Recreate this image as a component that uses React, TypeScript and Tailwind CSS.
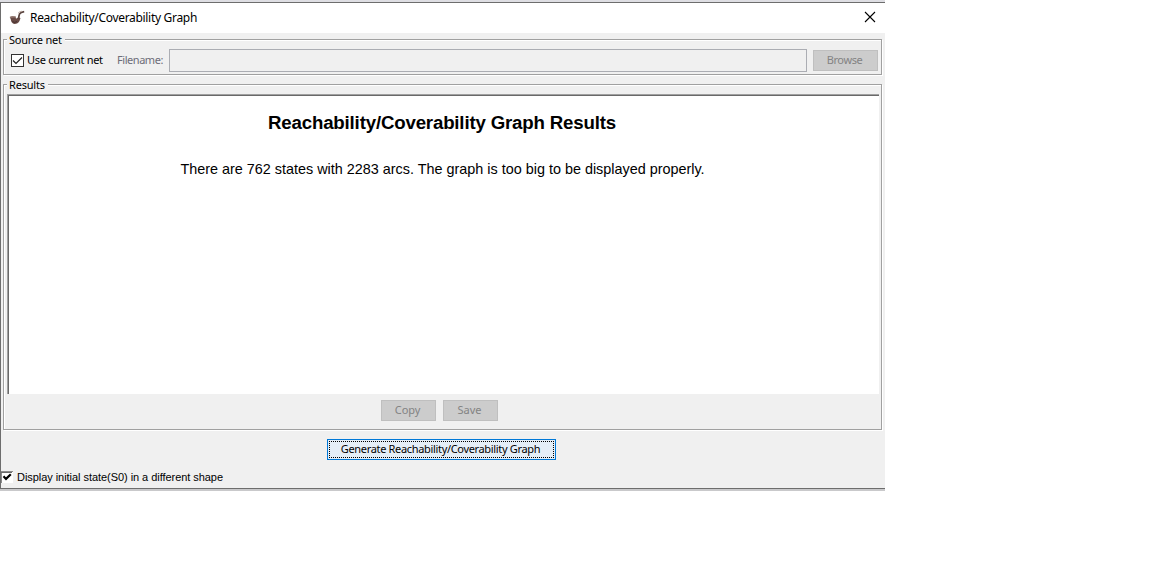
import type { ReactNode } from "react";

const ui = "font-['Noto_Sans',sans-serif] text-[11px]";

function Group({ title, titleClass, className, children }: { title: string; titleClass: string; className: string; children: ReactNode }) {
  return (
    <section
      className={`relative ml-[2px] w-[879px] shrink-0 border border-[#a0a0a0] shadow-[inset_1px_1px_0_#fff,1px_1px_0_#fff] ${className}`}
    >
      <h2 className={`absolute -top-[7px] left-[3px] h-[14px] bg-[#f0f0f0] pl-[2px] leading-[14px] whitespace-nowrap ${titleClass}`}>
        {title}
      </h2>
      {children}
    </section>
  );
}

function DisabledButton({ label, className }: { label: string; className: string }) {
  return (
    <button
      disabled
      className={`flex h-[21px] shrink-0 items-center justify-center border border-[#bfbfbf] bg-[#cccccc] pr-[2px] pb-[2px] leading-[14px] text-[#838383] ${className}`}
    >
      {label}
    </button>
  );
}

function PipeIcon() {
  return (
    <svg width="16" height="16" viewBox="0 0 16 16" className="shrink-0">
      <path d="M0.8 7 L3 6 L6.5 6.2 L7 8.8 L8.8 7.5 L11.5 8 L10.6 10.8 Q9 14 5.4 14 Q2.2 13.2 1.8 9.5 Z" fill="#684a45" />
      <path d="M9.7 9 Q9.8 5.5 10.6 3.9 Q11.6 2.2 15.2 1.6" stroke="#5b4540" strokeWidth="1.7" fill="none" />
      <path d="M0.9 7 L6.4 6.8 M9 3.2 Q10.6 1.4 13 1.2" stroke="#b9a49a" strokeWidth="0.9" fill="none" />
      <path d="M3.4 11.5 Q5.2 13.2 8 11.6" stroke="#442f2d" strokeWidth="1" fill="none" />
    </svg>
  );
}

export default function App() {
  return (
    <main className={`h-[569px] w-[1166px] overflow-hidden bg-white text-black ${ui}`}>
      <div className="h-[2px] w-[885px] bg-[#dedee3]" />
      <div className="flex h-[487px] w-[885px] flex-col border-y border-l border-[#6d6d6d] bg-[#f0f0f0]">
        <header className="flex h-[30px] shrink-0 items-center bg-white pr-[9px] pl-[8px]">
          <PipeIcon />
          <h1 className="ml-[5px] text-[12px] leading-[16px] tracking-[-0.31px] whitespace-nowrap">Reachability/Coverability Graph</h1>
          <button aria-label="Close" className="mb-[2px] ml-auto">
            <svg width="12" height="12" viewBox="0 0 12 12" className="block">
              <path d="M1 1 L11 11 M11 1 L1 11" stroke="#000" strokeWidth="1.1" />
            </svg>
          </button>
        </header>

        <Group title="Source net" titleClass="w-[58px] tracking-[-0.25px]" className="mt-[6px] flex h-[36px] items-start pt-[9px] pl-[7px]">
          <label className="flex h-[23px] w-[106px] shrink-0 items-center">
            <svg width="13" height="13" viewBox="0 0 13 13" className="shrink-0">
              <rect x="0.5" y="0.5" width="12" height="12" fill="#fff" stroke="#333" />
              <path d="M2 6.5 L5 9.5 L11 3.5" fill="none" stroke="#222" strokeWidth="1.2" />
            </svg>
            <span className="ml-[3px] tracking-[-0.29px] whitespace-nowrap">Use current net</span>
          </label>
          <span className="w-[52px] shrink-0 leading-[22px] tracking-[-0.45px] text-[#6d6d78]">Filename:</span>
          <div className="h-[23px] w-[638px] shrink-0 border border-[#abadb3] bg-[#f0f0f0]" />
          <DisabledButton label="Browse" className="mt-px ml-[6px] w-[65px] tracking-[-0.4px]" />
        </Group>

        <Group title="Results" titleClass="w-[41px] tracking-[-0.2px]" className="mt-[9px] flex h-[346px] flex-col pt-[9px] pl-[3px]">
          <div className="h-[300px] w-[872px] shrink-0 border-t border-l border-[#a0a0a0]">
            <article className="h-full border-t border-l border-[#696969] bg-white pt-[16px] text-center font-['Liberation_Sans',sans-serif]">
              <h3 className="-ml-[4px] text-[18.67px] leading-[22px] font-bold tracking-[-0.17px] whitespace-nowrap">Reachability/Coverability Graph Results</h3>
              <p className="mt-[26px] -ml-[3px] text-[14.4px] leading-[18px] whitespace-nowrap">
                There are 762 states with 2283 arcs. The graph is too big to be displayed properly.
              </p>
            </article>
          </div>
          <div className="mt-[6px] ml-[374px] flex gap-[7px]">
            <DisabledButton label="Copy" className="w-[55px] tracking-[-0.1px]" />
            <DisabledButton label="Save" className="w-[55px]" />
          </div>
        </Group>

        <button className="mt-[9px] ml-[326px] h-[21px] w-[229px] shrink-0 border border-[#0078d7] bg-[#e5eef7] p-px">
          <span className="flex h-full items-center justify-center border border-dotted border-black pr-[2px] pb-[2px] leading-[14px] tracking-[-0.33px] whitespace-nowrap">
            Generate Reachability/Coverability Graph
          </span>
        </button>

        <label className="mt-[10px] flex h-[14px] items-center">
          <svg width="12" height="12" viewBox="0 0 12 12" className="shrink-0">
            <rect width="12" height="12" fill="#fff" />
            <path d="M0 0.5 H12 M0.5 0 V12" stroke="#8a8a8a" />
            <path d="M0 1.5 H11" stroke="#696969" />
            <path d="M2.5 5.3 L5 7.9 L9.8 3.2" fill="none" stroke="#000" strokeWidth="2.2" />
          </svg>
          <span className="ml-[4px] font-['Liberation_Sans',sans-serif] leading-[14px] tracking-[-0.05px] whitespace-nowrap">
            Display initial state(S0) in a different shape
          </span>
        </label>
      </div>
      <div className="h-[2px] w-[885px] bg-[#c9c9cb]" />
    </main>
  );
}
